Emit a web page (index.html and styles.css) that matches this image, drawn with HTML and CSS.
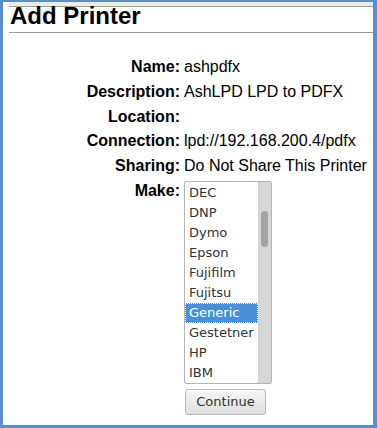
FILE: index.html
```html
<!DOCTYPE html>
<html>
<head>
<meta charset="utf-8">
<title>Add Printer</title>
<link rel="stylesheet" href="styles.css">
</head>
<body>
<div class="frame">
  <div class="band"></div>
  <h1 class="title">Add Printer</h1>
  <div class="rule"></div>
  <div class="form">
    <div class="label">Name:</div><div class="value">ashpdfx</div>
    <div class="label">Description:</div><div class="value">AshLPD LPD to PDFX</div>
    <div class="label">Location:</div><div class="value"></div>
    <div class="label">Connection:</div><div class="value">lpd://192.168.200.4/pdfx</div>
    <div class="label">Sharing:</div><div class="value">Do Not Share This Printer</div>
    <div class="label">Make:</div>
    <div class="value">
      <div class="listbox">
        <div class="items">
          <div class="items-inner">
            <div class="item">Dataproducts</div>
            <div class="item">DEC</div>
            <div class="item">DNP</div>
            <div class="item">Dymo</div>
            <div class="item">Epson</div>
            <div class="item">Fujifilm</div>
            <div class="item">Fujitsu</div>
            <div class="item selected">Generic</div>
            <div class="item">Gestetner</div>
            <div class="item">HP</div>
            <div class="item">IBM</div>
          </div>
        </div>
        <div class="scrollbar"><div class="thumb"></div></div>
      </div>
    </div>
    <div class="label"></div>
    <div class="value"><button class="btn" type="button">Continue</button></div>
  </div>
</div>
</body>
</html>
```
FILE: styles.css
```css
html, body {
  margin: 0;
  padding: 0;
  background: #fff;
}

.frame {
  width: 377px;
  height: 428px;
  box-sizing: border-box;
  border-style: solid;
  border-color: #5b8dd6;
  border-width: 2px 4px 3px 3px;
  background: #fff;
  overflow: hidden;
  font-family: "Liberation Sans", Arial, sans-serif;
  color: #000;
}

.band {
  height: 4px;
  margin-left: 6px;
  background: #ececec;
  border-bottom: 1px solid #9c9c9c;
}

.title {
  margin: 0 0 0 7px;
  font-size: 24px;
  line-height: 18px;
  font-weight: bold;
}

.rule {
  height: 0;
  border-top: 1px solid #9c9c9c;
  margin: 7px 0 0 6px;
}

.form {
  display: grid;
  grid-template-columns: 177px auto;
  column-gap: 4px;
  row-gap: 4.8px;
  margin-top: 24px;
  font-size: 16px;
  line-height: 20px;
  align-items: start;
}

.label {
  text-align: right;
  font-weight: bold;
  min-height: 20px;
}

.value {
  min-height: 20px;
  white-space: nowrap;
}

.listbox {
  width: 88px;
  height: 203px;
  box-sizing: border-box;
  border: 1px solid #b4b4b4;
  border-radius: 2px;
  display: flex;
  overflow: hidden;
  font-family: "DejaVu Sans", sans-serif;
  font-size: 13px;
}

.items {
  flex: 1;
  overflow: hidden;
}

.items-inner {
  margin-top: -19px;
}

.item {
  height: 20px;
  line-height: 20px;
  padding-left: 4px;
  color: #2e3436;
  white-space: nowrap;
}

.item.selected {
  background: #4a90d9;
  color: #fff;
  outline: 1px dotted #fff;
  outline-offset: -1px;
}

.scrollbar {
  width: 13px;
  flex: none;
  background: #d6d6d6;
}

.thumb {
  width: 7px;
  height: 36px;
  margin: 29px 0 0 3px;
  border-radius: 4px;
  background: #a4a4a4;
}

.btn {
  display: block;
  margin: 0 0 0 1px;
  width: 81px;
  height: 26px;
  box-sizing: border-box;
  border: 1px solid #b8b8b8;
  border-radius: 3px;
  background: linear-gradient(#f7f7f7, #dedede);
  font-family: "DejaVu Sans", sans-serif;
  font-size: 13px;
  color: #2e3436;
  padding: 0;
}
```
